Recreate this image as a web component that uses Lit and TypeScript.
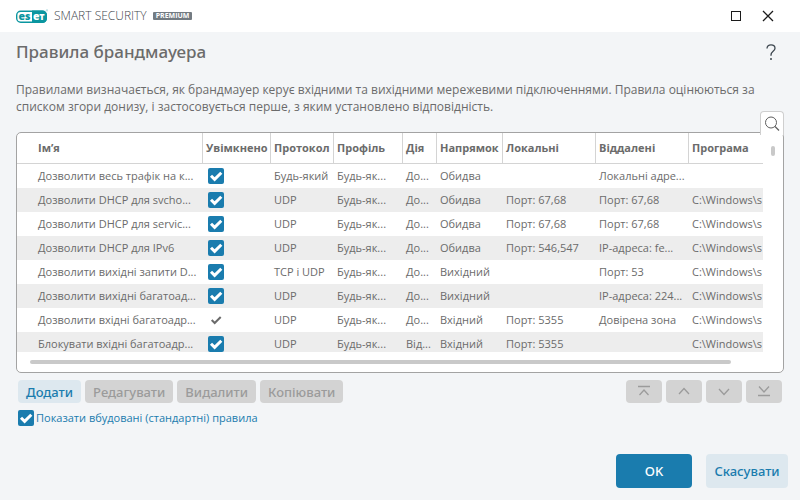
import { LitElement, html, css, svg, nothing } from "lit";
import { customElement, property } from "lit/decorators.js";

interface Rule {
  name: string;
  locked?: boolean;
  protocol: string;
  profile: string;
  action: string;
  direction: string;
  local: string;
  remote: string;
  app: string;
}

const APP = "C:\\Windows\\s";
const base = { protocol: "UDP", profile: "Будь-як...", action: "До...", app: APP };

const RULES: Rule[] = [
  { ...base, name: "Дозволити весь трафік на к...", protocol: "Будь-який", direction: "Обидва", local: "", remote: "Локальні адре...", app: "" },
  { ...base, name: "Дозволити DHCP для svcho...", direction: "Обидва", local: "Порт: 67,68", remote: "Порт: 67,68" },
  { ...base, name: "Дозволити DHCP для servic...", direction: "Обидва", local: "Порт: 67,68", remote: "Порт: 67,68" },
  { ...base, name: "Дозволити DHCP для IPv6", direction: "Обидва", local: "Порт: 546,547", remote: "IP-адреса: fe..." },
  { ...base, name: "Дозволити вихідні запити D...", protocol: "TCP і UDP", direction: "Вихідний", local: "", remote: "Порт: 53" },
  { ...base, name: "Дозволити вихідні багатоад...", direction: "Вихідний", local: "", remote: "IP-адреса: 224..." },
  { ...base, name: "Дозволити вхідні багатоадр...", locked: true, direction: "Вхідний", local: "Порт: 5355", remote: "Довірена зона" },
  { ...base, name: "Блокувати вхідні багатоадр...", action: "Від...", direction: "Вхідний", local: "Порт: 5355", remote: "" },
];

const HEADERS: [string, string][] = [
  ["name", "Ім’я"],
  ["enabled", "Увімкнено"],
  ["protocol", "Протокол"],
  ["profile", "Профіль"],
  ["action", "Дія"],
  ["direction", "Напрямок"],
  ["local", "Локальні"],
  ["remote", "Віддалені"],
  ["app", "Програма"],
];

const MOVES = [
  { label: "На початок", d: "M2 1.5h12M3.500 10l4.500-5 4.500 5" },
  { label: "Вгору", d: "M3 9l5-5.500 5 5.500" },
  { label: "Вниз", d: "M3 4l5 5.500 5-5.500" },
  { label: "В кінець", d: "M3 1.500l5 5.500 5-5.500M2 10.500h12" },
];

@customElement("check-box")
export class CheckBox extends LitElement {
  @property({ type: Boolean }) locked = false;
  @property() label = "";
  @property() text = "";

  static styles = css`
    :host { display: inline-flex; vertical-align: top; }
    label { display: inline-flex; align-items: center; gap: 2px; }
    .box { display: grid; width: 16px; height: 16px; }
    input {
      grid-area: 1 / 1;
      appearance: none;
      margin: 0;
      width: 16px;
      height: 16px;
      border-radius: 2px;
    }
    input:checked { background: #1a7cae; }
    input:disabled { background: none; }
    input:not(:checked) { border: 1px solid #1a7cae; box-sizing: border-box; }
    svg { grid-area: 1 / 1; pointer-events: none; fill: none; stroke: #fff; stroke-width: 3; }
    input:not(:checked) + svg { visibility: hidden; }
    .locked svg { stroke: #6b6b6b; stroke-width: 2; }
  `;

  render() {
    return html`<label>
      <span class="box ${this.locked ? "locked" : ""}">
        <input type="checkbox" checked ?disabled=${this.locked} aria-label=${this.label || nothing} />
        <svg viewBox="0 0 16 16" width="16" height="16">
          ${this.locked ? svg`<path d="M3.7 8l3 3 6-6" />` : svg`<path d="M3 7.8l3.6 3.6L13.3 4.7" />`}
        </svg>
      </span>
      ${this.text ? html`<span>${this.text}</span>` : nothing}
    </label>`;
  }
}

@customElement("rules-table")
export class RulesTable extends LitElement {
  static styles = css`
    :host { display: block; overflow: hidden; }
    table { width: 100%; border-collapse: separate; border-spacing: 0; table-layout: fixed; }
    th, td {
      box-sizing: border-box;
      padding: 0 0 0 4px;
      text-align: left;
      white-space: nowrap;
      overflow: hidden;
      height: 24px;
      line-height: 24px;
    }
    th {
      height: 31px;
      line-height: 30px;
      font-weight: 700;
      border-bottom: 1px solid #d4d4d4;
      padding-left: 3px;
    }
    th + th { border-left: 1px solid #d4d4d4; }
    th:first-child, td:first-child { padding-left: 21px; }
    tbody tr:nth-child(even) { background: #ededed; }
    check-box { padding: 4px 0 0 2px; }
    .name { width: 185px; }
    .enabled { width: 68px; }
    .protocol { width: 63px; }
    .profile { width: 69px; }
    .action { width: 34px; }
    .direction { width: 66px; }
    .local { width: 93px; }
    .remote { width: 93px; }
  `;

  render() {
    return html`<table>
      <thead>
        <tr>${HEADERS.map(([key, title]) => html`<th scope="col" class=${key}>${title}</th>`)}</tr>
      </thead>
      <tbody>
        ${RULES.map(
          (r) => html`<tr>
            <td>${r.name}</td>
            <td><check-box ?locked=${r.locked} label="Увімкнено"></check-box></td>
            <td>${r.protocol}</td>
            <td>${r.profile}</td>
            <td>${r.action}</td>
            <td>${r.direction}</td>
            <td>${r.local}</td>
            <td>${r.remote}</td>
            <td>${r.app}</td>
          </tr>`
        )}
      </tbody>
    </table>`;
  }
}

@customElement("app-root")
export class AppRoot extends LitElement {
  static styles = css`
    :host {
      display: flex;
      flex-direction: column;
      min-height: 100vh;
      background: #f3f5f7;
      color: #6b6b6b;
      font: 11px/16px "Open Sans", "Noto Sans", sans-serif;
    }
    button { font: inherit; border: 0; padding: 0; margin: 0; background: none; color: inherit; }
    svg { display: block; fill: none; }
    .titlebar { display: flex; align-items: center; height: 32px; padding: 0 26px 0 16px; background: #fff; }
    .product { margin-left: 6px; font-size: 12px; line-height: 20px; font-weight: 300; color: #3f474e; }
    .badge {
      margin-left: 6px;
      padding: 0 3px;
      border-radius: 1px;
      background: #737b82;
      color: #fff;
      font-weight: 700;
      font-size: 7px;
      line-height: 8px;
    }
    .window-buttons { display: flex; gap: 20px; margin-left: auto; }
    .window-buttons svg { stroke: #1b1b1b; }
    .head { display: flex; justify-content: space-between; align-items: center; height: 40px; padding: 0 20px 0 16px; }
    h1 { margin: 0; font-family: "Noto Sans", sans-serif; font-size: 17px; line-height: 24px; font-weight: 500; }
    .help { color: #3d474f; }
    .intro { margin: 0; padding: 9px 16px 0; font-size: 12px; line-height: 17px; }
    .panel {
      position: relative;
      flex: 1 1 0;
      min-height: 0;
      display: grid;
      grid-template: minmax(0, 1fr) 20px / minmax(0, 1fr) 20px;
      margin: 17px 16px 0;
      border: 1px solid #a3a3a3;
      border-radius: 5px;
      background: #fff;
    }
    .search {
      position: absolute;
      top: -22px;
      right: -1px;
      box-sizing: border-box;
      width: 24px;
      height: 24px;
      display: grid;
      place-items: center;
      background: #fff;
      border: 1px solid #cfcfcf;
      border-bottom: 0;
      border-radius: 4px 4px 0 0;
    }
    .vbar { justify-self: center; margin-top: 13px; width: 4px; height: 10px; border-radius: 2px; background: #c9c9c9; }
    .hbar { margin: 8px 32px 0 13px; height: 4px; border-radius: 2px; background: #c9c9c9; }
    .actions { display: flex; gap: 4px; padding: 7px 18px 0; }
    .actions button {
      height: 23px;
      padding: 0 8px;
      border-radius: 4px;
      background: #d3d3d3;
      color: #9b9b9b;
      font-family: "Noto Sans", sans-serif;
      font-size: 13px;
      line-height: 24px;
      font-weight: 500;
    }
    .actions .add { background: #dde8ef; color: #1a7cae; }
    .moves { display: flex; gap: 4px; margin-left: auto; }
    .moves button { width: 36px; display: grid; place-items: center; }
    .moves svg { stroke: #9b9b9b; stroke-width: 1.3; }
    .builtin { padding: 7px 18px 0; color: #1a7cae; }
    .footer { display: flex; justify-content: flex-end; gap: 14px; padding: 28px 12px 12px; }
    .footer button {
      height: 34px;
      border-radius: 4px;
      padding: 0 8px;
      min-width: 82px;
      font-family: "Noto Sans", sans-serif;
      font-size: 13px;
      font-weight: 500;
      background: #dde8ef;
      color: #1a7cae;
    }
    .footer .ok { min-width: 76px; background: #1a7cae; color: #fff; }
  `;

  render() {
    return html`
      <header class="titlebar">
        <svg width="32" height="15" viewBox="0 0 32 15" role="img" aria-label="ESET">
          <rect x="0.7" y="2.2" width="29.6" height="11" rx="4" fill="#fff" stroke="#0a96a0" stroke-width="1.4" />
          <path d="M16 1.5h10.5a4.5 4.5 0 0 1 4.5 4.5v3.5a4.5 4.5 0 0 1-4.5 4.5H16z" fill="#0a96a0" />
          <text x="2.6" y="11.3" font-family="Open Sans" font-weight="800" font-size="10.5" fill="#0a96a0">es</text>
          <text x="17" y="11.3" font-family="Open Sans" font-weight="800" font-size="10.5" fill="#fff">e</text>
          <text x="23.2" y="11.3" font-family="Open Sans" font-weight="800" font-size="9" fill="#fff">T</text>
          <circle cx="31" cy="1.4" r="0.8" stroke="#7cc5ca" stroke-width="0.5" />
        </svg>
        <span class="product">SMART SECURITY</span>
        <span class="badge">PREMIUM</span>
        <div class="window-buttons">
          <button aria-label="Розгорнути">
            <svg width="12" height="12" viewBox="0 0 12 12"><rect x="1.5" y="1.5" width="9" height="9" /></svg>
          </button>
          <button aria-label="Закрити">
            <svg width="12" height="12" viewBox="0 0 12 12"><path d="M1 1l10 10M11 1L1 11" stroke-width="1.3" /></svg>
          </button>
        </div>
      </header>
      <div class="head">
        <h1>Правила брандмауера</h1>
        <button class="help" aria-label="Довідка">
          <svg width="18" height="18" viewBox="0 0 18 18">
            <path d="M5 5.5C5 3 6.700 1.800 9 1.800s4 1.300 4 3.500c0 3-4 3.200-4 6.700v.8" stroke="currentColor" stroke-width="1.300" />
            <circle cx="9" cy="16" r="1" fill="currentColor" />
          </svg>
        </button>
      </div>
      <p class="intro">
        Правилами визначається, як брандмауер керує вхідними та вихідними мережевими підключеннями. Правила
        оцінюються за списком згори донизу, і застосовується перше, з яким установлено відповідність.
      </p>
      <section class="panel">
        <rules-table></rules-table>
        <div class="vbar"></div>
        <div class="hbar"></div>
        <button class="search" aria-label="Пошук">
          <svg width="16" height="16" viewBox="0 0 16 16" stroke="#5e5e5e">
            <circle cx="7" cy="6.500" r="5.500" /><path d="M11 10.500l4 4" stroke-width="1.200" />
          </svg>
        </button>
      </section>
      <div class="actions">
        <button class="add">Додати</button>
        <button disabled>Редагувати</button>
        <button disabled>Видалити</button>
        <button disabled>Копіювати</button>
        <div class="moves">
          ${MOVES.map(
            (m) => html`<button disabled aria-label=${m.label}>
              <svg width="16" height="13" viewBox="0 0 16 13"><path d=${m.d} /></svg>
            </button>`
          )}
        </div>
      </div>
      <div class="builtin"><check-box text="Показати вбудовані (стандартні) правила"></check-box></div>
      <footer class="footer">
        <button class="ok">OK</button>
        <button>Скасувати</button>
      </footer>
    `;
  }
}
